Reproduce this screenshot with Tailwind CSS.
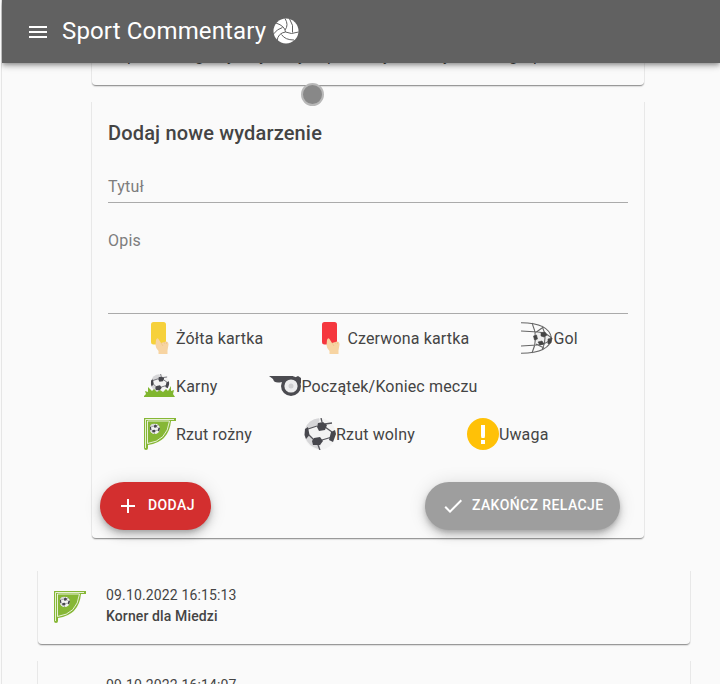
<!DOCTYPE html>
<html lang="pl">
<head>
<meta charset="utf-8">
<title>Sport Commentary</title>
<script src="https://cdn.jsdelivr.net/npm/@tailwindcss/browser@4"></script>
</head>
<body class="bg-[#fafafa] font-['Roboto',sans-serif] text-[#444] overflow-hidden">
<svg class="hidden" aria-hidden="true">
  <defs>
    <symbol id="ball" viewBox="0 0 32 32">
      <circle cx="16" cy="16" r="15.700" fill="#f3f3f3"/>
      <path d="M15 .3A15.700 15.700 0 0 0 .5 12l4-1 9-4 2-5z" fill="#d6d6d8"/>
      <path d="M1 19q3 9 14 12.500l2-6-7-2-5-6z" fill="#d6d6d8"/>
      <path d="M4 11l9-3M21 9l7 5M21 6l7-1M5 17l5 5M18 22l10-3M18 4l-1-4M14 27l2 5" stroke="#55555b" stroke-width="1.300" fill="none"/>
      <path d="M14 5l5-1 4 3-2 5-6 1-2-4zM1 11l3-2 1.500 8-3.500 4-1.500-4zM10 20l6-1 3 4-3 4-7 0-1-4zM27 14l4-2 1 4-3 8-4-2z" fill="#47474d"/>
    </symbol>
    <symbol id="corner" viewBox="0 0 32 32">
      <path d="M0 0h32v3h-5Q25 24 4 27v3q0 2-2 2-2 0-2-2z" fill="#86b735"/>
      <path d="M1.500 30V1.500H30M3.500 25.500V3h22Q23 23 3.500 25.500" fill="none" stroke="#fff" stroke-width=".8"/>
      <svg x="5.500" y="5.500" width="10.500" height="10.500"><use href="#ball"/></svg>
    </symbol>
    <symbol id="card" viewBox="0 0 32 32">
      <rect x="7" y="0" width="15" height="22.500" rx="2.500" fill="currentColor"/>
      <path d="M12 18q1-3 2.500-1l2.500 4 5-1.500q2.500 0 2.500 3l-1 6v3.500h-9v-3q-3-3-3-6z" fill="#f7d4a2"/>
      <path d="M17 21l2 3M20 20l1 2M22.500 20v2" stroke="#e9bd85" stroke-width=".6"/>
    </symbol>
  </defs>
</svg>
<div class="relative h-[684px] w-[720px] overflow-hidden border-l border-[#fafafa]">
  <div class="h-full border-l border-[#e6e6e6]">
    <header class="relative z-10 flex h-[63px] items-center bg-[#616161] pl-6 text-white shadow-[0_2px_4px_-1px_rgba(0,0,0,.3),0_4px_5px_rgba(0,0,0,.14),0_1px_10px_rgba(0,0,0,.12)]">
      <svg class="size-6" viewBox="0 0 24 24" fill="currentColor"><path d="M3 6h18v2H3zM3 11h18v2H3zM3 16h18v2H3z"/></svg>
      <h1 class="mb-0.5 ml-3 text-2xl leading-8 tracking-[.15px]">Sport Commentary</h1>
      <svg class="mb-0.5 ml-[7px] size-[26px]" viewBox="0 0 26 26"><circle cx="13" cy="13" r="12.500" fill="#fff"/><g fill="none" stroke="#616161" stroke-width="1"><path d="M12.500 14Q12 8 3 5M12.500 14Q5 15 4 23M12.500 14Q18 17 25.500 14M12 12Q16 7 12 .5M16.500 .8Q21 7 19.500 14.500M9.500 9.500Q4 11 .5 16M8.500 16.500Q12 22 21 22"/></g></svg>
    </header>
    <main>
      <section class="ml-[90px] flow-root h-[23px] w-[552px] rounded-b border-b border-[#999] shadow-[-1px_0_0_#e8e8e8,1px_0_0_#e8e8e8,0_1px_1px_#ddd]">
        <p class="-mt-[17px] flex pl-[35px] text-base leading-5"><span class="w-[68px]">po</span><span class="w-[23px]">go</span><span class="w-9">by</span><span class="w-[30px]">ty</span><span class="w-[43px]">my</span><span class="w-[42px]">po</span><span class="w-[65px]">my</span><span class="w-[75px]">by</span><span class="w-6">go</span><span>po</span></p>
      </section>
      <section class="ml-[90px] mt-4 h-[437px] w-[552px] rounded-b border-b border-[#999] shadow-[-1px_0_0_#e8e8e8,1px_0_0_#e8e8e8,0_1px_1px_#ddd]">
        <h2 class="px-4 pt-[15px] text-xl font-medium leading-8 tracking-[.16px]">Dodaj nowe wydarzenie</h2>
        <div class="mx-4 mt-5 h-[34px] border-b border-[#aaa] pt-2 text-base leading-5 tracking-[.2px] text-[#7d7d7d]">Tytuł</div>
        <div class="mx-4 mt-5 h-[91px] border-b border-[#aaa] pt-2 text-base leading-5 tracking-[.2px] text-[#7d7d7d]">Opis</div>
        <div class="ml-[52px] mt-2 space-y-4 text-base tracking-[.16px]">
          <div class="flex h-8 items-center gap-[52px]">
            <div class="flex items-center"><svg class="size-8 text-[#f6d13b]"><use href="#card"/></svg><span class="pt-0.5">Żółta kartka</span></div>
            <div class="flex items-center"><svg class="size-8 text-[#f5373e]"><use href="#card"/></svg><span class="pt-0.5">Czerwona kartka</span></div>
            <div class="flex items-center"><svg class="size-8" viewBox="0 0 32 32"><circle cx="21" cy="16" r="7" fill="#eee"/><g fill="none" stroke="#666" stroke-width="1.100"><path d="M0 .8Q28 1 30.500 16 29 31 0 31.200M0 9l17 1q10 1 14 7M0 24l16-1q11-1 15-7M11 1q7 15 0 30M21 4q6 12 0 24M14 11l7-5M15 22l8 4"/></g><path d="M20 11l4-1 2 3-3 2-3-1zM12.500 14l3-1 1 4-3 1zM17 20l4-1 2 3-4 1zM27 17l4-1-1 5-3 1z" fill="#444" stroke="#444" stroke-width=".6"/></svg><span class="pt-0.5">Gol</span></div>
          </div>
          <div class="flex h-8 items-center gap-[52px]">
            <div class="flex items-center"><svg class="size-8" viewBox="0 0 32 32"><svg x="6.500" y="4" width="19" height="19"><use href="#ball"/></svg><path d="M0 26l2-2-1-3 3 1V17l4 4 2-2 3 3 3-2 3 2 3-3 2 2 3-5 0 5 3-1-1 4 2 3H0z" fill="#80b62f"/></svg><span class="pt-0.5">Karny</span></div>
            <div class="flex items-center"><svg class="size-8" viewBox="0 0 32 32"><path d="M0 6h24l1 2 4-2 3 2v5l-4 4-15-5Q5 14 4 9z" fill="#4b4b50"/><circle cx="22" cy="16" r="10" fill="#4b4b50"/><circle cx="22" cy="16" r="6.600" fill="#ededee"/><circle cx="22" cy="16" r="2.500" fill="#cfcfd1"/></svg><span class="pt-0.5">Początek/Koniec meczu</span></div>
          </div>
          <div class="flex h-8 items-center gap-[52px]">
            <div class="flex items-center"><svg class="size-8"><use href="#corner"/></svg><span class="pt-0.5">Rzut rożny</span></div>
            <div class="flex items-center"><svg class="size-8"><use href="#ball"/></svg><span class="pt-0.5">Rzut wolny</span></div>
            <div class="flex items-center"><svg class="size-8" viewBox="0 0 32 32"><circle cx="16" cy="16" r="16" fill="#ffc107"/><path d="M14 7h4v11l-.5 2h-3l-.5-2zM14 22h4v4h-4z" fill="#fff"/></svg><span class="pt-0.5">Uwaga</span></div>
          </div>
        </div>
        <div class="mt-8 flex justify-between pl-2 pr-6 text-sm font-medium leading-6 tracking-[.4px] text-white">
          <button class="flex h-12 w-[111px] items-center rounded-full bg-[#d32f2f] pb-0.5 pl-4 shadow-[0_3px_5px_-1px_rgba(0,0,0,.2),0_6px_10px_rgba(0,0,0,.14),0_1px_18px_rgba(0,0,0,.12)]"><svg class="mr-2 mt-0.5 size-6" viewBox="0 0 24 24" fill="currentColor"><path d="M19 13h-6v6h-2v-6H5v-2h6V5h2v6h6z"/></svg>DODAJ</button>
          <button class="flex h-12 w-[195px] items-center rounded-full bg-[#9e9e9e] pb-0.5 pl-4 shadow-[0_3px_5px_-1px_rgba(0,0,0,.2),0_6px_10px_rgba(0,0,0,.14),0_1px_18px_rgba(0,0,0,.12)]"><svg class="mr-[7px] mt-0.5 size-6" viewBox="0 0 24 24" fill="currentColor"><path d="M21 7L9 19l-5.500-5.500 1.410-1.410L9 16.170 19.590 5.590z"/></svg>ZAKOŃCZ RELACJE</button>
        </div>
      </section>
      <section class="ml-9 mt-8 flex h-[74px] w-[652px] rounded-b border-b border-[#999] pl-4 pt-3.5 shadow-[-1px_0_0_#e8e8e8,1px_0_0_#e8e8e8,0_1px_1px_#ddd]">
        <svg class="mt-1.5 size-8"><use href="#corner"/></svg>
        <div class="ml-5 text-sm leading-[21px]"><p class="tracking-[.15px]">09.10.2022 16:15:13</p><p class="font-medium tracking-[.12px]">Korner dla Miedzi</p></div>
      </section>
      <section class="ml-9 mt-4 h-[74px] w-[652px] pl-[68px] pt-3.5 text-sm leading-[21px] tracking-[.15px] shadow-[-1px_0_0_#e8e8e8,1px_0_0_#e8e8e8]"><p>09.10.2022 16:14:07</p></section>
    </main>
  </div>
  <div class="absolute left-[300px] top-[83px] size-[23px] rounded-full border-2 border-[#b8b8b8] bg-[#888]"></div>
</div>
</body>
</html>
